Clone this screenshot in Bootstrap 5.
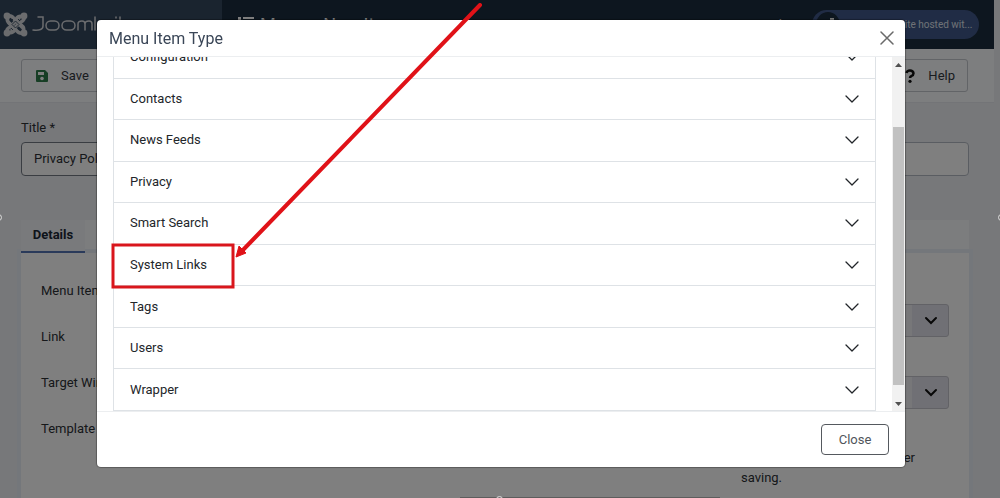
<!DOCTYPE html>
<html lang="en">
<head>
<meta charset="utf-8">
<meta name="viewport" content="width=device-width, initial-scale=1">
<title>Menus: New Item</title>
<link href="https://cdn.jsdelivr.net/npm/bootstrap@5.3.0/dist/css/bootstrap.min.css" rel="stylesheet">
<style>
body{font-family:Roboto,"Liberation Sans",sans-serif;font-size:13px;line-height:20px;background:#eff1f5;color:#2c3035;height:100vh;overflow:hidden}
.page-wrap{margin-right:6px}
.top-bar{height:49px;background:#1a2c3e}
.brand-box{width:222px;background:#34495f;padding-left:3px}
.brand-box svg{overflow:visible}
.list-mark{margin-top:-2px}
.page-title{font-size:18px;color:#fff;padding-left:5px}
.site-pill{width:167px;height:29px;margin-right:15px;background:#41588a;color:#dfe3ec;font-size:10px}
.pill-dot{width:24px;height:25px;background:#1a2c3e}
.tool-strip{height:54px;padding:0 26px 0 21px;background:#fbfcfe;border-bottom:1px solid #e6e9ef}
.tool-btn{height:33px;font-size:13px;border:1px solid #c4c8ce;background:#fbfcfe;color:#33383e;border-radius:3px;padding:0 12px 0 13px}
.form-zone{padding:15px 25px 0 21px}
.title-input{height:34px;font-size:13px;border:1px solid #b4bac4;border-radius:4px;padding:0 12px 2px;color:#2c3035;background:#fff}
.title-input.has-value{border-color:#747b85}
.tab-strip{margin-top:44px;height:33px;background:#f9fafc;border-bottom:1px solid #d5d8de}
.tab-strip button{width:64px;height:33px;border:0;border-bottom:2px solid #5574b4;background:#f3f5f9;font-weight:700;color:#1c2836;padding:0 0 2px}
.tab-panel{background:#fff;box-shadow:0 0 0 4px #e9eff7;padding:28px 20px 0;height:245px}
.label-col{display:grid;grid-auto-rows:46px;align-content:start}
.side-col{width:208px;padding-top:23px}
.side-col select{appearance:none;height:33px;font-size:13px;border:1px solid #c5c5cc;border-radius:3px;background-color:#eeeef3;background-image:linear-gradient(#e0e0ea,#e0e0ea);background-size:36px 100%;background-position:right;background-repeat:no-repeat}
.select-box{position:relative;margin-bottom:39px}
.select-box svg{position:absolute;right:11px;top:12px}
.shade{position:fixed;inset:0;background:rgba(0,0,0,.5)}
.type-dialog{position:fixed;top:20px;left:97px;right:95px;height:447px;background:#fff;border-radius:4px;box-shadow:0 0 1px 1px rgba(0,0,0,.3)}
.dialog-head{height:37px;border-bottom:1px solid #eceef0;padding:0 11px 0 12px}
.dialog-head h1{font-size:16px;line-height:20px;font-weight:400;color:#3a4657;padding-top:2px}
.plain-btn{border:0;background:none;padding:0;line-height:0}
.dialog-body{height:354px}
.type-list{height:375px;border:1px solid #dee2e6;margin:0 16px;display:grid;grid-auto-rows:1fr;border-bottom:0}
.type-list button{border:0;border-bottom:1px solid #dee2e6;background:#fff;color:#22262a;padding:0 16px}
.scroll-rail{width:13px;background:#f1f1f1;padding:6px 0 5px}
.scroll-thumb{width:11px;height:258px;background:#c1c1c1;margin-bottom:auto;margin-top:60px}
.dialog-foot{height:56px;border-top:1px solid #eceef0;padding-right:16px}
.close-btn{width:68px;height:31px;border:1px solid #55595e;border-radius:4px;background:#fff;color:#50555b;font-size:13px}
.pointer-art{position:absolute;left:0;top:0;overflow:visible;pointer-events:none}
.grip{position:fixed;width:7px;height:7px;border:1px solid #ddd;border-radius:50%;background:#777}
.grip-l{left:-5px;top:214px}.grip-r{right:-5px;top:214px}.grip-b{left:calc(50% - 4px);bottom:-5px}
.edge-line{position:fixed;left:46%;right:28%;bottom:0;height:1px;background:#5d5d5d}
</style>
</head>
<body>
<svg width="0" height="0" class="position-absolute" aria-hidden="true">
  <symbol id="chev" viewBox="0 0 14 8"><path d="M1 1l6 6 6-6" fill="none" stroke="#212529" stroke-width="1.3" stroke-linecap="round" stroke-linejoin="round"/></symbol>
  <symbol id="chev-bold" viewBox="0 0 14 10"><path d="M2 2l5 5 5-5" fill="none" stroke="#111" stroke-width="2" stroke-linecap="round"/></symbol>
</svg>
<div class="page-wrap">
  <header class="top-bar d-flex align-items-center">
    <a href="#" class="brand-box h-100 d-flex align-items-center text-decoration-none" aria-label="Joomla!">
      <svg width="130" height="26" viewBox="0 0 130 26">
        <g fill="none" stroke="#d6d8dc" stroke-width="3.6" stroke-linecap="round" stroke-linejoin="round">
          <path d="M4 4Q9 3 11 7L19 15"/><path d="M21 4Q22 8 18 10L9 18"/><path d="M21 21Q16 22 14 19L6 11"/><path d="M4 21Q3 17 7 15L16 6"/>
          <path d="M5 5Q3 9 7 12M20 5Q16 3 13 7M20 20Q22 16 18 13M5 20Q9 22 12 18"/>
        </g>
        <g fill="#d6d8dc"><circle cx="4" cy="4" r="3.4"/><circle cx="21" cy="4" r="3.4"/><circle cx="21" cy="21" r="3.4"/><circle cx="4" cy="21" r="3.4"/></g>
        <g fill="none" stroke="#34495f" stroke-width=".9"><path d="M12.500 9l3.500 3.500-3.500 3.500L9 12.500z"/><path d="M8 9l2-2M17 9l-2-2M17 16l-2 2M8 16l2 2"/></g>
        <g fill="none" stroke="#d6d8dc" stroke-width="1.500" stroke-linecap="round">
          <path d="M35 5H40V14Q40 19 30 18"/><rect x="43" y="9" width="13" height="9" rx="4.500"/><rect x="59" y="9" width="13" height="9" rx="4.500"/>
          <path d="M75 18V12Q75 9 79 9Q82 9 82 12V18M82 12Q82 9 86 9Q89 9 89 12V18M92 5V18M97 12H104V18H97V15H104M113 5V6M117 5V14"/>
        </g>
      </svg>
    </a>
    <svg class="list-mark ms-3" width="17" height="16" viewBox="0 0 17 16" fill="#fff"><path d="M0 1h3v3H0zM5 1h11v2H5zM0 7h3v3H0zM5 7h11v2H5zM0 13h3v3H0zM5 13h11v2H5z"/></svg>
    <span class="page-title flex-grow-1">Menus: New Item</span>
    <span class="text-white me-4">22 July</span>
    <a href="#" class="site-pill rounded-pill d-flex align-items-center justify-content-between text-decoration-none ps-1 pe-2 text-nowrap">
      <span class="pill-dot rounded-circle d-flex justify-content-center flex-shrink-0"><svg width="14" height="16" viewBox="0 0 14 16" fill="#eee"><path d="M1 8h5v7H1zM9 6h4v5H9z"/></svg></span>
      <span>Your Joomla Site hosted wit...</span>
    </a>
  </header>
  <div class="tool-strip d-flex align-items-center justify-content-between">
    <button class="tool-btn d-flex align-items-center" type="button">
      <svg width="14" height="14" viewBox="0 0 14 14"><path d="M2 1h8l3 3v8q0 1-1 1H2q-1 0-1-1V2q0-1 1-1z" fill="#2f7d4b"/><path d="M3 3h6v3H3z" fill="#fff"/><circle cx="7" cy="9.500" r="1.800" fill="#fff"/></svg>
      <span class="ps-2 ms-1">Save</span>
    </button>
    <button class="tool-btn d-flex align-items-center" type="button">
      <svg width="12" height="14" viewBox="0 0 12 14"><path d="M2.500 4Q3 1.500 6 1.500T9.500 4.200Q9.500 6 7.500 7Q6 7.600 6 9" fill="none" stroke="#111" stroke-width="2.500"/><circle cx="6" cy="12.300" r="1.600" fill="#111"/></svg>
      <span class="ps-2 ms-1">Help</span>
    </button>
  </div>
  <main class="form-zone">
    <label for="item-title" class="d-block mb-1">Title *</label>
    <div class="d-flex gap-3">
      <input id="item-title" class="title-input has-value w-50" value="Privacy Policy">
      <input aria-label="Alias" class="title-input w-50">
    </div>
    <div class="tab-strip" role="tablist"><button type="button" role="tab">Details</button></div>
    <section class="tab-panel d-flex justify-content-between">
      <div class="label-col"><span>Menu Item Type *</span><span>Link</span><span>Target Window</span><span>Template Style</span></div>
      <div class="side-col">
        <div class="select-box"><select class="w-100" aria-label="Status"><option></option></select><svg width="14" height="10"><use href="#chev-bold"/></svg></div>
        <div class="select-box"><select class="w-100" aria-label="Parent item"><option></option></select><svg width="14" height="10"><use href="#chev-bold"/></svg></div>
        <div class="text-nowrap">Ordering will be available after<br>saving.</div>
      </div>
    </section>
  </main>
</div>
<div class="shade"></div>
<div class="type-dialog" role="dialog" aria-labelledby="dlg-title">
  <div class="dialog-head d-flex align-items-center justify-content-between">
    <h1 id="dlg-title" class="m-0">Menu Item Type</h1>
    <button type="button" class="plain-btn" aria-label="Close dialog"><svg width="14" height="14" viewBox="0 0 14 14"><path d="M1 1l12 12M13 1L1 13" stroke="#6a6a6a" stroke-width="1.500" stroke-linecap="round"/></svg></button>
  </div>
  <div class="dialog-body d-flex">
    <div class="flex-grow-1 h-100 overflow-hidden d-flex flex-column justify-content-end">
      <div class="type-list flex-shrink-0" id="types"></div>
    </div>
    <div class="scroll-rail d-flex flex-column align-items-center">
      <svg width="7" height="4" viewBox="0 0 7 4"><path d="M0 4l3.500-4L7 4z" fill="#505050"/></svg>
      <div class="scroll-thumb"></div>
      <svg width="7" height="4" viewBox="0 0 7 4"><path d="M0 0l3.500 4L7 0z" fill="#505050"/></svg>
    </div>
  </div>
  <div class="dialog-foot d-flex align-items-center justify-content-end"><button type="button" class="close-btn">Close</button></div>
  <svg class="pointer-art" width="400" height="280" viewBox="0 0 400 280" aria-hidden="true">
    <rect x="16" y="225" width="120" height="42" fill="none" stroke="#d9161c" stroke-width="3"/>
    <path d="M383-15L145 231" stroke="#e01218" stroke-width="4" stroke-linecap="round"/>
    <path d="M139 237L142 226L149 233z" fill="#e01218" stroke="#e01218" stroke-width="1"/>
  </svg>
</div>
<div class="edge-line"></div>
<div class="grip grip-l"></div><div class="grip grip-r"></div><div class="grip grip-b"></div>
<script src="https://cdn.jsdelivr.net/npm/bootstrap@5.3.0/dist/js/bootstrap.bundle.min.js"></script>
<script>
const names=["Configuration","Contacts","News Feeds","Privacy","Smart Search","System Links","Tags","Users","Wrapper"];
document.getElementById("types").innerHTML=names.map(n=>`<button type="button" class="d-flex align-items-center justify-content-between"><span>${n}</span><svg width="14" height="8"><use href="#chev"/></svg></button>`).join("");
</script>
</body>
</html>
